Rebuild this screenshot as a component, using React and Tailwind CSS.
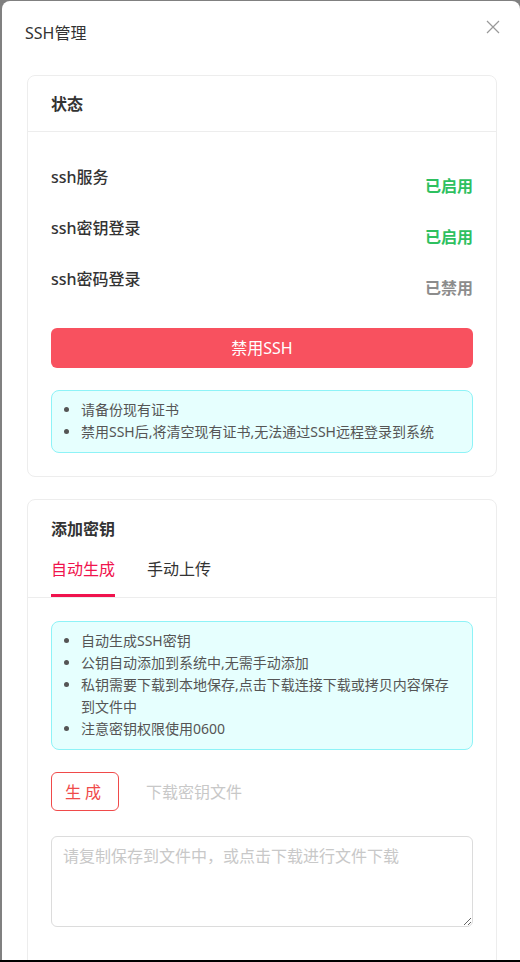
const font = { fontFamily: '"Noto Sans", "Noto Sans CJK SC", sans-serif' }

function StatusRow({ label, value, on }) {
  return (
    <div className="flex h-[51px] items-start justify-between">
      <span className="text-[16px] leading-6 font-medium text-[#333]">{label}</span>
      <span className={`mt-[9px] text-[16px] leading-6 font-bold ${on ? 'text-[#2ec05f]' : 'text-[#8c8c8c]'}`}>
        {value}
      </span>
    </div>
  )
}

function Notice({ items }) {
  return (
    <div className="rounded-lg border border-[#8ef3f7] bg-[#e6fffe] pt-[8px] pb-[9px] pr-[14px] pl-[29px]">
      <ul className="list-disc text-[14px] leading-[22px] text-[#555] marker:text-[#555]">
        {items.map((t) => (
          <li key={t}>{t}</li>
        ))}
      </ul>
    </div>
  )
}

export default function App() {
  return (
    <div className="flex h-[962px] flex-col bg-[#808080]" style={font}>
      <div className="ml-[2px] mt-[1px] flex-1 overflow-hidden rounded-t-lg bg-white">
        {/* title */}
        <div className="flex items-start justify-between pt-[20px] pl-[23px] pr-[20px]">
          <h2 className="text-[16px] leading-6 text-[#333]">SSH管理</h2>
          <svg className="mt-[-1px] h-[14px] w-[14px] text-[#999]" viewBox="0 0 14 14" fill="none" stroke="currentColor" strokeWidth="1.2">
            <path d="M1 1l12 12M13 1L1 13" />
          </svg>
        </div>

        <div className="pl-[25px] pr-[23px] pt-[30px]">
          {/* status card */}
          <div className="rounded-lg border border-[#ededed]">
            <div className="flex h-[56px] items-center border-b border-[#ededed] px-[23px]">
              <span className="text-[16px] font-bold text-[#333]">状态</span>
            </div>
            <div className="px-[23px] pt-[33px] pb-[23px]">
              <StatusRow label="ssh服务" value="已启用" on />
              <StatusRow label="ssh密钥登录" value="已启用" on />
              <StatusRow label="ssh密码登录" value="已禁用" />
              <button className="mt-[10px] h-[40px] w-full rounded-md bg-[#f8515f] text-[16px] text-white">
                禁用SSH
              </button>
              <div className="mt-[22px]">
                <Notice items={['请备份现有证书', '禁用SSH后,将清空现有证书,无法通过SSH远程登录到系统']} />
              </div>
            </div>
          </div>

          {/* add key card */}
          <div className="mt-[22px] rounded-lg border border-[#ededed]">
            <div className="border-b border-[#ededed] px-[23px] pt-[17px]">
              <div className="text-[16px] leading-6 font-bold text-[#333]">添加密钥</div>
              <div className="mt-[16px] flex gap-[32px] text-[16px] leading-6">
                <div className="border-b-[3px] border-[#f0134d] pb-[13px] text-[#f0134d]">自动生成</div>
                <div className="pb-[13px] text-[#333]">手动上传</div>
              </div>
            </div>
            <div className="px-[23px] pt-[23px] pb-[60px]">
              <Notice
                items={[
                  '自动生成SSH密钥',
                  '公钥自动添加到系统中,无需手动添加',
                  '私钥需要下载到本地保存,点击下载连接下载或拷贝内容保存到文件中',
                  '注意密钥权限使用0600',
                ]}
              />
              <div className="mt-[22px] flex items-center gap-[27px]">
                <button className="h-[39px] w-[68px] rounded-md border border-[#f04a4a] text-[16px] tracking-[4px] text-[#f04a4a]">
                  生成
                </button>
                <span className="text-[16px] text-[#c8c8c8]">下载密钥文件</span>
              </div>
              <textarea
                className="mt-[25px] block h-[91px] w-full rounded-md border border-[#dcdcdc] px-[11px] py-[7px] text-[16px] leading-6 placeholder:text-[#c8c8c8] outline-none"
                placeholder="请复制保存到文件中，或点击下载进行文件下载"
              />
            </div>
          </div>
        </div>
      </div>
      <div className="h-[2px] bg-black" />
    </div>
  )
}
